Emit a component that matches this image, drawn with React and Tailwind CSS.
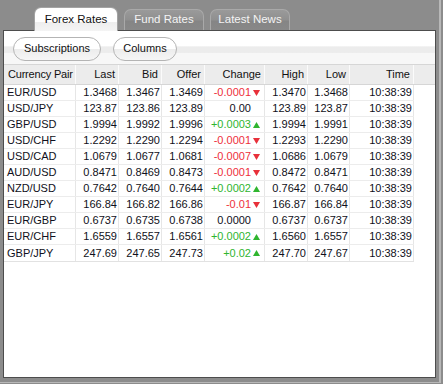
import React from "react";

const rows = [
  ["EUR/USD", "1.3468", "1.3467", "1.3469", "-0.0001", "down", "1.3470", "1.3468", "10:38:39"],
  ["USD/JPY", "123.87", "123.86", "123.89", "0.00", "", "123.89", "123.87", "10:38:39"],
  ["GBP/USD", "1.9994", "1.9992", "1.9996", "+0.0003", "up", "1.9994", "1.9991", "10:38:39"],
  ["USD/CHF", "1.2292", "1.2290", "1.2294", "-0.0001", "down", "1.2293", "1.2290", "10:38:39"],
  ["USD/CAD", "1.0679", "1.0677", "1.0681", "-0.0007", "down", "1.0686", "1.0679", "10:38:39"],
  ["AUD/USD", "0.8471", "0.8469", "0.8473", "-0.0001", "down", "0.8472", "0.8471", "10:38:39"],
  ["NZD/USD", "0.7642", "0.7640", "0.7644", "+0.0002", "up", "0.7642", "0.7640", "10:38:39"],
  ["EUR/JPY", "166.84", "166.82", "166.86", "-0.01", "down", "166.87", "166.84", "10:38:39"],
  ["EUR/GBP", "0.6737", "0.6735", "0.6738", "0.0000", "", "0.6737", "0.6737", "10:38:39"],
  ["EUR/CHF", "1.6559", "1.6557", "1.6561", "+0.0002", "up", "1.6560", "1.6557", "10:38:39"],
  ["GBP/JPY", "247.69", "247.65", "247.73", "+0.02", "up", "247.70", "247.67", "10:38:39"],
];

const widths = ["w-[72px]", "w-[43px]", "w-[43px]", "w-[43px]", "w-[60px]", "w-[43px]", "w-[42px]", "w-[64px]"];
const headers = ["Currency Pair", "Last", "Bid", "Offer", "Change", "High", "Low", "Time"];

function Arrow({ dir }) {
  if (dir === "up")
    return (
      <svg width="7" height="6" viewBox="0 0 7 6" className="shrink-0">
        <path d="M3.5 0 L7 6 L0 6 Z" fill="#2fb52f" />
      </svg>
    );
  if (dir === "down")
    return (
      <svg width="7" height="6" viewBox="0 0 7 6" className="shrink-0">
        <path d="M0 0 L7 0 L3.5 6 Z" fill="#e8303a" />
      </svg>
    );
  return <span className="w-[7px] shrink-0" />;
}

function Tab({ label, active }) {
  if (active)
    return (
      <div className="relative z-10 -mb-px flex h-[24px] w-[84px] items-center justify-center rounded-t-[7px] border border-b-0 border-[#a3a3a3] bg-[linear-gradient(#ffffff_0%,#ffffff_60%,#eeeeee_60%,#f4f4f4_100%)] text-[11.5px] text-[#111]">
        {label}
      </div>
    );
  return (
    <div className="flex h-[21px] w-[80px] items-center justify-center rounded-t-[7px] border border-b-0 border-[#a9a9a9] bg-[linear-gradient(#9a9a9a_0%,#8f8f8f_50%,#858585_55%,#888888_100%)] text-[11.5px] text-[#f4f4f4]">
      {label}
    </div>
  );
}

function Btn({ label, w }) {
  return (
    <div className={`flex h-[24px] ${w} items-center justify-center rounded-full border border-[#b4b4b4] bg-[linear-gradient(#ffffff_0%,#ffffff_48%,#ececec_50%,#f6f6f6_100%)] text-[11px] text-[#111]`}>
      {label}
    </div>
  );
}

export default function App() {
  return (
    <div className="h-[384px] w-[443px] bg-[#8c8c8c] font-['Liberation_Sans',sans-serif]">
      <div className="h-[383px] w-[441px] border-b border-r-2 border-[#b8b8b8]">
        <div className="flex h-[30px] items-end gap-[6px] pl-[34px]">
          <Tab label="Forex Rates" active />
          <Tab label="Fund Rates" />
          <Tab label="Latest News" />
        </div>
        <div className="ml-[3px] flex h-[348px] w-[433px] flex-col border border-[#4d4d4d] bg-white">
          <div className="flex h-[33px] shrink-0 items-center gap-[12px] bg-[linear-gradient(#ffffff_0%,#ffffff_45%,#ececec_48%,#ececec_65%,#f7f7f7_67%,#f7f7f7_100%)] pl-[9px] pt-[2px]">
            <Btn label="Subscriptions" w="w-[88px]" />
            <Btn label="Columns" w="w-[64px]" />
          </div>
          <div className="flex h-[21px] shrink-0 border-y border-[#d6d6d6] bg-[#ececec] text-[11px] text-[#111]">
            {headers.map((h, i) => (
              <div
                key={h}
                className={`${widths[i]} flex shrink-0 items-center whitespace-nowrap border-r border-[#fbfbfb] ${i === 0 ? "justify-start pl-[4px] tracking-[-0.2px]" : "justify-end pr-[3px]"}`}
              >
                {h}
              </div>
            ))}
          </div>
          <div className="w-[410px] shrink-0 border-b border-[#e2e2e2] text-[11px] text-[#101020]">
            {rows.map((r) => (
              <div key={r[0]} className="flex h-[16px] whitespace-nowrap border-b border-[#ececec] last:border-b-0">
                <div className={`${widths[0]} flex shrink-0 items-center border-r border-[#e6e6e6] pl-[3px]`}>{r[0]}</div>
                <div className={`${widths[1]} flex shrink-0 items-center justify-end border-r border-[#e6e6e6] pr-[1px]`}>{r[1]}</div>
                <div className={`${widths[2]} flex shrink-0 items-center justify-end border-r border-[#e6e6e6] pr-[1px]`}>{r[2]}</div>
                <div className={`${widths[3]} flex shrink-0 items-center justify-end border-r border-[#e6e6e6] pr-[1px]`}>{r[3]}</div>
                <div className={`${widths[4]} flex shrink-0 items-center justify-end gap-[2px] border-r border-[#e6e6e6] pr-[4px]`}>
                  <span className={r[5] === "up" ? "text-[#2fb52f]" : r[5] === "down" ? "text-[#ee2f3a]" : ""}>{r[4]}</span>
                  <Arrow dir={r[5]} />
                </div>
                <div className={`${widths[5]} flex shrink-0 items-center justify-end border-r border-[#e6e6e6] pr-[1px]`}>{r[6]}</div>
                <div className={`${widths[6]} flex shrink-0 items-center justify-end border-r border-[#e6e6e6] pr-[1px]`}>{r[7]}</div>
                <div className={`${widths[7]} flex shrink-0 items-center justify-end border-r border-[#e6e6e6] pr-[1px]`}>{r[8]}</div>
              </div>
            ))}
          </div>
        </div>
      </div>
    </div>
  );
}
